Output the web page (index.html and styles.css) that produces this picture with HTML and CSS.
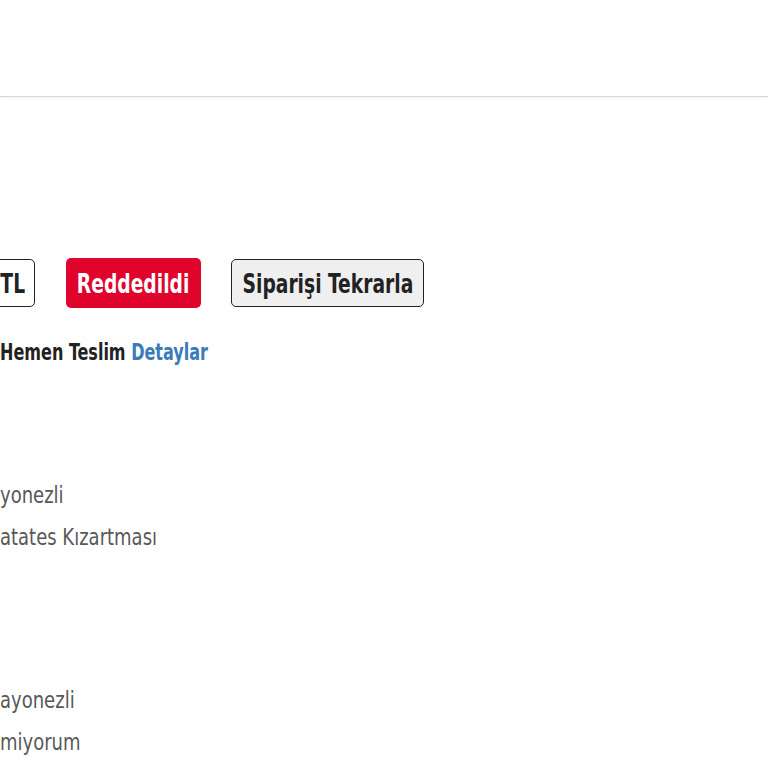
FILE: index.html
```html
<!DOCTYPE html>
<html lang="tr">
<head>
  <meta charset="UTF-8" />
  <meta name="viewport" content="width=device-width, initial-scale=1.0" />
  <title>Siparişlerim</title>
  <link rel="stylesheet" href="styles.css">
</head>
<body>
  <div class="topbar"></div>

  <div class="order">
    <div class="order-head">
      <span class="tag price"><span class="narrow">TL</span></span>
      <span class="tag rejected"><span class="narrow">Reddedildi</span></span>
      <button class="tag repeat"><span class="narrow">Siparişi Tekrarla</span></button>
    </div>

    <p class="delivery"><span class="narrow">Hemen Teslim <a href="#" class="details">Detaylar</a></span></p>

    <ul class="items">
      <li><span class="narrow">yonezli</span></li>
      <li><span class="narrow">atates Kızartması</span></li>
    </ul>

    <ul class="items">
      <li><span class="narrow">ayonezli</span></li>
      <li><span class="narrow">miyorum</span></li>
    </ul>
  </div>
</body>
</html>
```

FILE: styles.css
```css
body {
  margin: 0;
  font-family: "DejaVu Sans Condensed", "DejaVu Sans", sans-serif;
  color: #222;
  background: #fff;
  overflow: hidden;
}
.topbar {
  height: 96px;
  border-bottom: 1px solid #d6d6d6;
  box-shadow: 0 2px 3px rgba(0,0,0,0.03);
}
.narrow {
  display: inline-block;
  white-space: nowrap;
  transform: scaleX(0.77);
  transform-origin: left center;
}
.order {
  padding-top: 161px;
}
.order-head {
  display: flex;
  align-items: center;
  gap: 31px;
}
.tag {
  display: flex;
  align-items: center;
  justify-content: center;
  height: 48px;
  border-radius: 5px;
  font-family: inherit;
  font-size: 27px;
  font-weight: bold;
  box-sizing: border-box;
  padding: 0;
}
.tag .narrow {
  flex: none;
  transform-origin: center;
}
.price {
  width: 60px;
  margin-left: -25px;
  justify-content: flex-end;
  padding-right: 9px;
  border: 1.5px solid #222;
  background: #fff;
}
.price .narrow {
  transform-origin: right center;
}
.rejected {
  width: 135px;
  height: 50px;
  background: #e0042c;
  color: #fff;
}
.repeat {
  width: 193px;
  margin-left: -1px;
  border: 1.5px solid #222;
  background: #efefef;
  color: #222;
}
.delivery {
  margin: 29px 0 0;
  font-size: 23px;
  line-height: 30px;
  font-weight: bold;
}
.delivery .narrow {
  transform: scaleX(0.775);
}
.details {
  color: #3c7bb9;
  text-decoration: none;
}
.items {
  list-style: none;
  margin: 107px 0 0;
  padding: 0;
  font-size: 23px;
  color: #585858;
}
.items + .items {
  margin-top: 121px;
}
.items li {
  line-height: 42px;
}
.items .narrow {
  transform: scaleX(0.87);
}
```
